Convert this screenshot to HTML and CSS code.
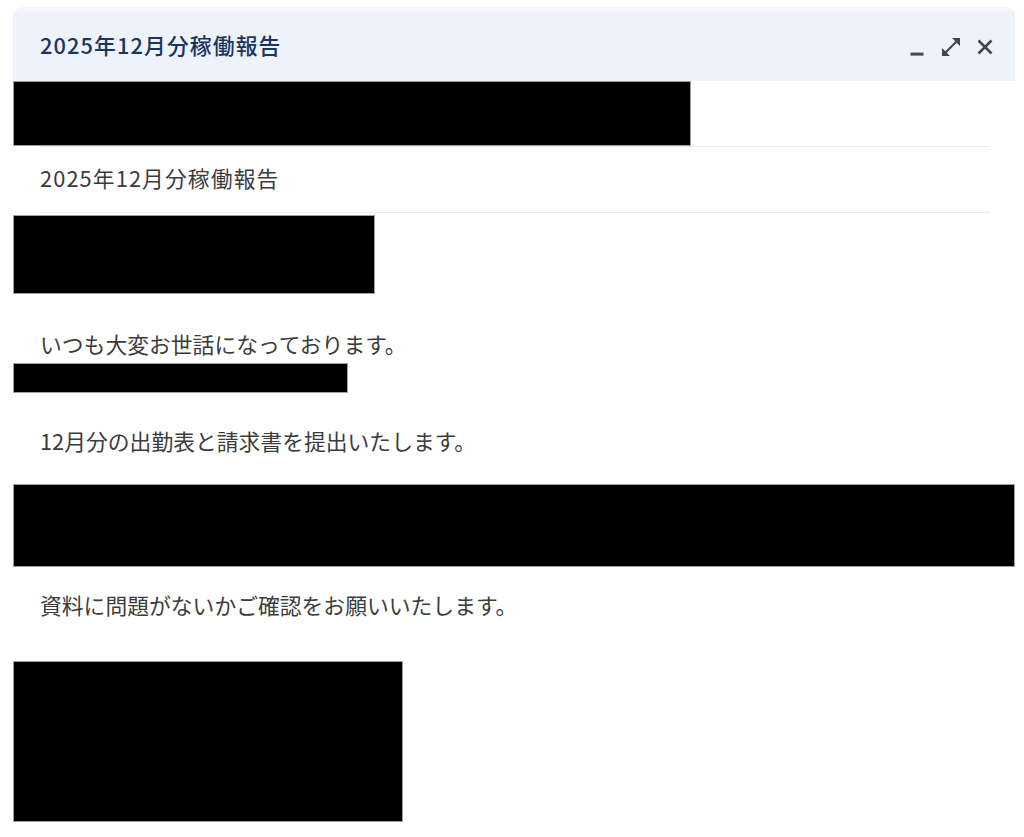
FILE: index.html
```html
<!DOCTYPE html>
<html lang="ja">
<head>
<meta charset="utf-8">
<title>2025年12月分稼働報告</title>
<link rel="stylesheet" href="styles.css">
</head>
<body>
<div class="compose">
  <div class="frame-top">
    <div class="header">
      <div class="title">2025年12月分稼働報告</div>
      <div class="actions">
        <svg class="icon" viewBox="0 0 24 24" aria-label="最小化"><path d="M5.5 17.6h13v3h-13z"/></svg>
        <svg class="icon" viewBox="0 0 24 24" aria-label="全画面"><path d="M21 11V3h-8l3.29 3.29-10 10L3 13v8h8l-3.29-3.29 10-10z"/></svg>
        <svg class="icon stroke" viewBox="0 0 24 24" aria-label="閉じる"><path d="M5.5 5.5l13 13M18.5 5.5l-13 13"/></svg>
      </div>
    </div>
  </div>
  <div class="redact r1"></div>
  <div class="rule"></div>
  <div class="subject">2025年12月分稼働報告</div>
  <div class="rule"></div>
  <div class="redact r2"></div>
  <p class="line l1">いつも大変お世話になっております。</p>
  <div class="redact r3"></div>
  <p class="line l2">12月分の出勤表と請求書を提出いたします。</p>
  <div class="redact r4"></div>
  <p class="line l3">資料に問題がないかご確認をお願いいたします。</p>
  <div class="redact r5"></div>
</div>
</body>
</html>
```

FILE: styles.css
```css
html, body {
  margin: 0;
  padding: 0;
  background: #ffffff;
}

body {
  font-family: "Noto Sans CJK JP", "Noto Sans", sans-serif;
}

.compose {
  width: 1002px;
  margin-left: 13px;
  padding-top: 7px;
}

.frame-top {
  background: linear-gradient(#f6f6f6, #eceff3);
  border-radius: 10px 10px 0 0;
  padding-top: 5px;
}

.header {
  height: 69px;
  background: #eef2fa;
  display: flex;
  align-items: center;
  justify-content: space-between;
  padding: 0 18px 0 27px;
  box-sizing: border-box;
}

.title {
  font-size: 21.8px;
  font-weight: 500;
  color: #1b3560;
  letter-spacing: 1.1px;
  margin-top: -5px;
}

.actions {
  display: flex;
  gap: 10px;
  margin-top: 0;
}

.icon {
  width: 24px;
  height: 24px;
  fill: #444746;
}

.icon.stroke {
  fill: none;
  stroke: #444746;
  stroke-width: 2.6;
}

.redact {
  background: #000;
  border: 1px solid #a0a0a0;
  box-sizing: border-box;
}

.r1 { width: 678px; height: 65px; }
.r2 { width: 362px; height: 79px; margin-top: 2px; }
.r3 { width: 335px; height: 30px; margin-top: 4px; }
.r4 { width: 1002px; height: 83px; margin-top: 28px; }
.r5 { width: 390px; height: 161px; margin-top: 41px; }

.rule {
  height: 1px;
  background: #ebebeb;
  margin-left: 27px;
  width: 950px;
}

.subject {
  height: 65px;
  display: flex;
  align-items: center;
  padding-left: 27px;
  font-size: 21.8px;
  color: #3c3c3c;
  letter-spacing: 1.1px;
  margin-top: -2px;
  margin-bottom: 2px;
}

.line {
  margin: 0;
  padding-left: 27px;
  font-size: 21.8px;
  line-height: 30px;
  color: #3c3c3c;
}

.l1 { margin-top: 35px; }
.l2 { margin-top: 33px; }
.l3 { margin-top: 23px; }
```
